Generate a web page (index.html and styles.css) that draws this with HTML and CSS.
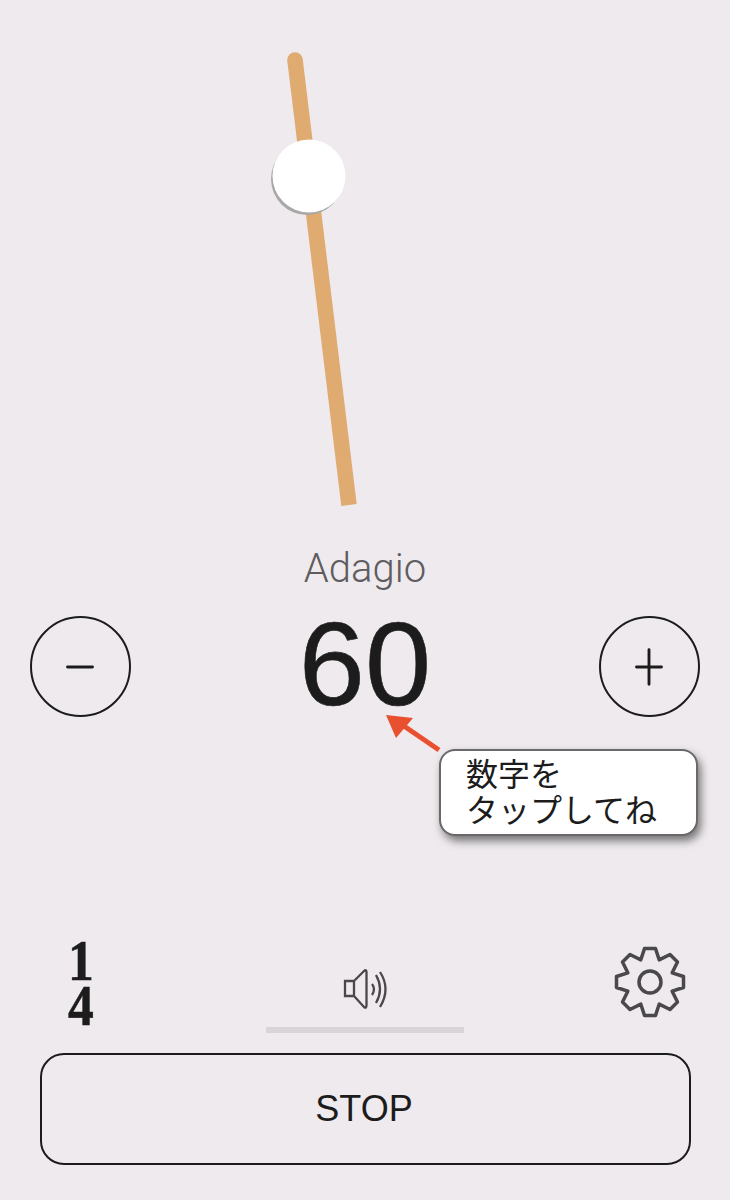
FILE: index.html
```html
<!DOCTYPE html>
<html>
<head>
  <title>Metronome</title>
  <meta name="viewport" content="width=device-width, initial-scale=1.0">
  <link rel="stylesheet" href="styles.css">
</head>

<body>

<div class="app">
  <svg class="pendulum" viewBox="0 0 730 540">
    <line x1="295" y1="60" x2="349" y2="505" stroke="#e0ab70" stroke-width="15.500"/>
    <circle cx="295" cy="60" r="7.750" fill="#e0ab70"/>
    <circle cx="307" cy="179" r="36" fill="#a9a7a8"/>
    <circle cx="309" cy="176" r="36.500" fill="#fff"/>
  </svg>

  <div class="tempo-name">Adagio</div>

  <div class="tempo-row">
    <button class="round-btn">
      <svg viewBox="0 0 100 100"><path d="M37 50H63" class="sign"/></svg>
    </button>
    <div class="tempo">60</div>
    <button class="round-btn">
      <svg viewBox="0 0 100 100"><path d="M37 50H63M50 32V68" class="sign"/></svg>
    </button>
  </div>

  <svg class="arrow" viewBox="0 0 60 44">
    <path d="M55 36L17 10" stroke="#e8502f" stroke-width="5" fill="none"/>
    <path d="M2 1L29 4L12 24Z" fill="#e8502f"/>
  </svg>

  <div class="callout">数字を<br>タップしてね</div>

  <div class="tools">
    <div class="beat"><span>1</span><span>4</span></div>
    <svg class="speaker" viewBox="0 0 70 60">
      <path d="M15 24H24V39H15ZM24 24L34 14Q36.500 12 36.500 15V48Q36.500 52 34 50L24 39" class="thin"/>
      <path d="M42 27Q46 32 42 38M46 18Q54 32 46 46M50 15Q61 32 50 50" class="thin"/>
    </svg>
    <svg class="gear" viewBox="-40 -40 80 80">
      <path class="cog" d="M-5.500 -33.500H5.500L9.180 -22.170L20 -27.500L27.500 -20L22.170 -9.180L33.500 -5.500V5.500L22.170 9.180L27.500 20L20 27.500L9.180 22.170L5.500 33.500H-5.500L-9.180 22.170L-20 27.500L-27.500 20L-22.170 9.180L-33.500 5.500V-5.500L-22.170 -9.180L-27.500 -20L-20 -27.500L-9.180 -22.170Z"/>
      <circle class="cog" cx="0" cy="0" r="11"/>
    </svg>
  </div>

  <div class="volume"></div>

  <button class="stop">STOP</button>
</div>

</body>
</html>
```

FILE: styles.css
```css
* {
  margin: 0;
  padding: 0;
  box-sizing: border-box;
}

body {
  background: #eeeaed;
  color: #1c1c1c;
  font-family: "Liberation Sans", "Noto Sans CJK JP", sans-serif;
}

.app {
  position: relative;
  height: 1200px;
  overflow: hidden;
}

.pendulum {
  display: block;
  width: 730px;
  height: 540px;
}

.tempo-name {
  height: 56px;
  padding-top: 1px;
  line-height: 56px;
  text-align: center;
  font-family: Roboto, "Liberation Sans", sans-serif;
  font-weight: 300;
  font-size: 40px;
  color: #5f5c60;
}

.tempo-row {
  display: flex;
  justify-content: space-between;
  align-items: center;
  height: 101px;
  margin-top: 20px;
  padding: 0 30px;
}

.round-btn {
  width: 101px;
  height: 101px;
  border: 2.500px solid #1c1c1c;
  border-radius: 50%;
  background: none;
}

.round-btn svg {
  display: block;
  width: 96px;
  height: 96px;
}

.sign {
  stroke: #1c1c1c;
  stroke-width: 3;
  fill: none;
  stroke-linecap: round;
}

.tempo {
  font-size: 119px;
  line-height: 101px;
  margin-top: -6px;
  -webkit-text-stroke: 0.600px #1c1c1c;
}

.arrow {
  position: absolute;
  left: 384px;
  top: 714px;
  width: 60px;
  height: 44px;
}

.callout {
  position: absolute;
  left: 438.500px;
  top: 748.500px;
  width: 259px;
  height: 87px;
  padding: 6px 0 0 25.500px;
  background: #fff;
  border: 2px solid #6a686a;
  border-radius: 16px;
  box-shadow: 3px 5px 8px rgba(0, 0, 0, 0.5);
  font-size: 32px;
  line-height: 36px;
  white-space: nowrap;
}

.tools {
  display: grid;
  grid-template-columns: 160px 1fr 160px;
  align-items: center;
  justify-items: center;
  height: 84px;
  margin-top: 222px;
}

.beat {
  display: flex;
  flex-direction: column;
  align-items: center;
  margin: 0 0 0 1px;
  font-family: "Liberation Serif", serif;
  font-weight: bold;
  font-size: 56px;
  line-height: 45px;
  transform: scaleX(0.920);
  -webkit-text-stroke: 0.500px #1c1c1c;
}

.speaker {
  width: 70px;
  height: 60px;
  margin-top: 6px;
}

.thin {
  stroke: #4a484b;
  stroke-width: 2.300;
  fill: none;
}

.gear {
  width: 80px;
  height: 80px;
  margin-top: -4px;
}

.cog {
  stroke: #4a484b;
  stroke-width: 3.500;
  stroke-linejoin: round;
  fill: none;
}

.volume {
  width: 198px;
  height: 6px;
  margin: 4px auto 0;
  background: #d8d4d8;
}

.stop {
  display: block;
  width: 651px;
  height: 111.500px;
  margin: 20px 0 0 39.500px;
  padding: 1px 2px 0 0;
  border: 2.500px solid #1c1c1c;
  border-radius: 24px;
  background: none;
  color: #1c1c1c;
  font-family: "Liberation Sans", sans-serif;
  font-size: 36px;
}
```
